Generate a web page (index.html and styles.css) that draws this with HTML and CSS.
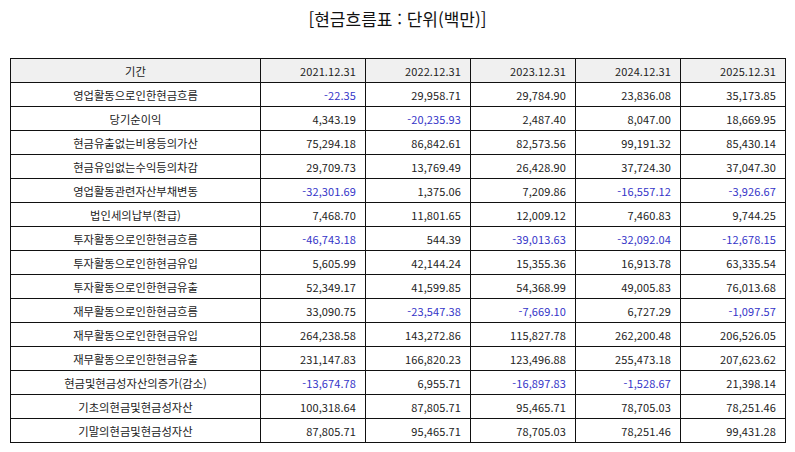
FILE: index.html
```html
<!DOCTYPE html>
<html lang="ko">
<head>
<meta charset="utf-8">
<link rel="stylesheet" href="styles.css">
</head>
<body>
<div class="title">[현금흐름표 : 단위(백만)]</div>
<table class="cf">
<colgroup>
<col class="c-label"><col class="c-num"><col class="c-num"><col class="c-num"><col class="c-num"><col class="c-num">
</colgroup>
<thead>
<tr><th class="lbl">기간</th><th>2021.12.31</th><th>2022.12.31</th><th>2023.12.31</th><th>2024.12.31</th><th>2025.12.31</th></tr>
</thead>
<tbody>
<tr><td class="lbl">영업활동으로인한현금흐름</td><td class="neg">-22.35</td><td>29,958.71</td><td>29,784.90</td><td>23,836.08</td><td>35,173.85</td></tr>
<tr><td class="lbl">당기순이익</td><td>4,343.19</td><td class="neg">-20,235.93</td><td>2,487.40</td><td>8,047.00</td><td>18,669.95</td></tr>
<tr><td class="lbl">현금유출없는비용등의가산</td><td>75,294.18</td><td>86,842.61</td><td>82,573.56</td><td>99,191.32</td><td>85,430.14</td></tr>
<tr><td class="lbl">현금유입없는수익등의차감</td><td>29,709.73</td><td>13,769.49</td><td>26,428.90</td><td>37,724.30</td><td>37,047.30</td></tr>
<tr><td class="lbl">영업활동관련자산부채변동</td><td class="neg">-32,301.69</td><td>1,375.06</td><td>7,209.86</td><td class="neg">-16,557.12</td><td class="neg">-3,926.67</td></tr>
<tr><td class="lbl">법인세의납부(환급)</td><td>7,468.70</td><td>11,801.65</td><td>12,009.12</td><td>7,460.83</td><td>9,744.25</td></tr>
<tr><td class="lbl">투자활동으로인한현금흐름</td><td class="neg">-46,743.18</td><td>544.39</td><td class="neg">-39,013.63</td><td class="neg">-32,092.04</td><td class="neg">-12,678.15</td></tr>
<tr><td class="lbl">투자활동으로인한현금유입</td><td>5,605.99</td><td>42,144.24</td><td>15,355.36</td><td>16,913.78</td><td>63,335.54</td></tr>
<tr><td class="lbl">투자활동으로인한현금유출</td><td>52,349.17</td><td>41,599.85</td><td>54,368.99</td><td>49,005.83</td><td>76,013.68</td></tr>
<tr><td class="lbl">재무활동으로인한현금흐름</td><td>33,090.75</td><td class="neg">-23,547.38</td><td class="neg">-7,669.10</td><td>6,727.29</td><td class="neg">-1,097.57</td></tr>
<tr><td class="lbl">재무활동으로인한현금유입</td><td>264,238.58</td><td>143,272.86</td><td>115,827.78</td><td>262,200.48</td><td>206,526.05</td></tr>
<tr><td class="lbl">재무활동으로인한현금유출</td><td>231,147.83</td><td>166,820.23</td><td>123,496.88</td><td>255,473.18</td><td>207,623.62</td></tr>
<tr><td class="lbl">현금및현금성자산의증가(감소)</td><td class="neg">-13,674.78</td><td>6,955.71</td><td class="neg">-16,897.83</td><td class="neg">-1,528.67</td><td>21,398.14</td></tr>
<tr><td class="lbl">기초의현금및현금성자산</td><td>100,318.64</td><td>87,805.71</td><td>95,465.71</td><td>78,705.03</td><td>78,251.46</td></tr>
<tr><td class="lbl">기말의현금및현금성자산</td><td>87,805.71</td><td>95,465.71</td><td>78,705.03</td><td>78,251.46</td><td>99,431.28</td></tr>
</tbody>
</table>
</body>
</html>
```

FILE: styles.css
```css
html, body {
  margin: 0;
  padding: 0;
  background: #ffffff;
}
body {
  font-family: "Noto Sans CJK KR", "Noto Sans", sans-serif;
  color: #222222;
}
.title {
  text-align: center;
  font-size: 17px;
  line-height: 20px;
  padding-top: 9px;
  margin-bottom: 29px;
  color: #111111;
}
.cf {
  margin-left: 10px;
  width: 776px;
  table-layout: fixed;
  border-collapse: collapse;
  font-size: 11px;
}
.c-label { width: 250px; }
.c-num { width: 105px; }
.cf th, .cf td {
  border: 1px solid #111111;
  height: 23px;
  padding: 0 9px 0 4px;
  text-align: right;
  font-weight: normal;
  line-height: 14px;
  white-space: nowrap;
  letter-spacing: 0.1px;
}
.cf th {
  background: #f0f0f0;
}
.cf .lbl {
  text-align: center;
  padding: 0 4px;
  font-size: 11.3px;
  letter-spacing: 0;
}
.cf .neg {
  color: #3434c8;
}
```
